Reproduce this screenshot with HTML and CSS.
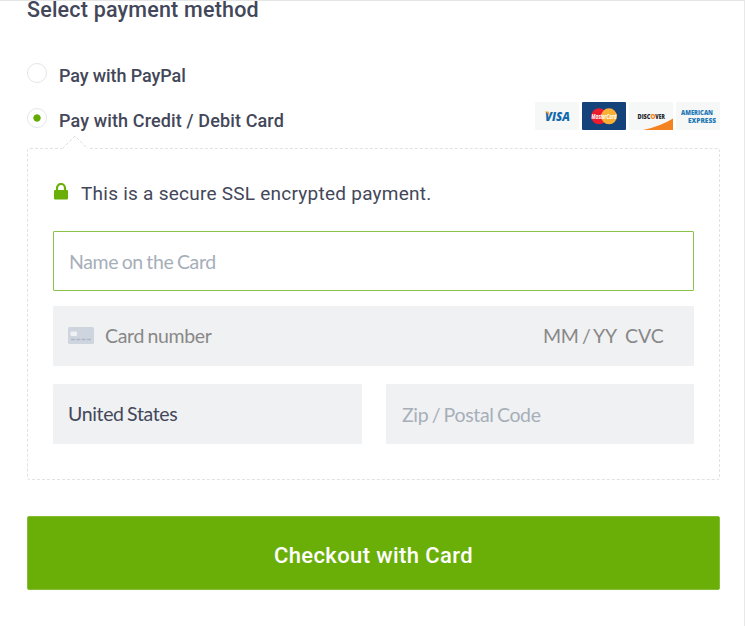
FILE: index.html
```html
<!DOCTYPE html>
<html lang="en">
<head>
    <meta charset="UTF-8">
    <meta name="viewport" content="width=device-width, initial-scale=1.0">
    <title>Select payment method</title>
    <link rel="stylesheet" href="styles.css">
</head>
<body>

    <form class="payment">
        <h2 class="title">Select payment method</h2>

        <!-- Payment methods -->
        <label class="method">
            <input type="radio" name="method" class="radio">
            <span class="method-name paypal-name">Pay with PayPal</span>
        </label>
        <div class="method-row">
            <label class="method">
                <input type="radio" name="method" class="radio" checked>
                <span class="method-name card-name">Pay with Credit / Debit Card</span>
            </label>
            <div class="cards">
                <svg class="card-logo" viewBox="0 0 44 28">
                    <rect width="44" height="28" rx="1" fill="#f6f8f8"/>
                    <text x="10" y="18.5" textLength="25" lengthAdjust="spacingAndGlyphs" font-size="12.5" font-weight="800" font-style="italic" fill="#1268ac">VISA</text>
                    <path d="M9.5 9.5h4l1.4 4.6c-1.2-2-3-3.6-5.4-4.6z" fill="#f3a42b"/>
                </svg>
                <svg class="card-logo" viewBox="0 0 44 28">
                    <rect width="44" height="28" rx="1" fill="#14427a"/>
                    <circle cx="17" cy="14.3" r="8" fill="#ec1c2e"/>
                    <circle cx="27" cy="14.3" r="8" fill="#fbb034"/>
                    <text x="9.5" y="16.5" textLength="25" lengthAdjust="spacingAndGlyphs" font-size="6.3" font-weight="bold" font-style="italic" fill="#fff">MasterCard</text>
                </svg>
                <svg class="card-logo" viewBox="0 0 44 28">
                    <rect width="44" height="28" rx="1" fill="#f6f8f8"/>
                    <path d="M14 28Q31 24.5 44 16.5V28z" fill="#f58220"/>
                    <text y="16.6" font-size="6.2" font-weight="800" fill="#26282b"><tspan x="8.5" textLength="13" lengthAdjust="spacingAndGlyphs">DISC</tspan><tspan x="21.5" fill="#f58220">O</tspan><tspan x="26.3" textLength="9.5" lengthAdjust="spacingAndGlyphs">VER</tspan></text>
                </svg>
                <svg class="card-logo" viewBox="0 0 44 28">
                    <rect width="44" height="28" rx="1" fill="#f6f8f8"/>
                    <text x="5" y="13" textLength="32" lengthAdjust="spacingAndGlyphs" font-size="6.3" font-weight="800" fill="#2379b5">AMERICAN</text>
                    <text x="12" y="20.5" textLength="28" lengthAdjust="spacingAndGlyphs" font-size="6.3" font-weight="800" fill="#2379b5">EXPRESS</text>
                </svg>
            </div>
        </div>

        <!-- Card form -->
        <div class="card-box">
            <svg class="pointer" viewBox="0 0 26 15">
                <path d="M0 13h26v2H0z" fill="#fff"/>
                <path d="M.5 13.5 13 1l12.5 12.5" fill="none" stroke="#d9dee2" stroke-dasharray="3 2"/>
            </svg>
            <div class="secure">
                <svg class="lock" viewBox="0 0 14 17">
                    <path d="M3 7.5V5a4 4 0 0 1 8 0v2.5" fill="none" stroke="#6aae08" stroke-width="2.2"/>
                    <rect y="7" width="14" height="9.5" rx="1" fill="#6aae08"/>
                </svg>
                <span class="secure-text">This is a secure SSL encrypted payment.</span>
            </div>
            <input type="text" class="input-field input-active" placeholder="Name on the Card">
            <div class="input-field card-number">
                <svg class="card-icon" viewBox="0 0 26 17">
                    <rect width="26" height="17" rx="1.5" fill="#cfd5df"/>
                    <rect x="2.5" y="4.5" width="6.5" height="4.5" rx="1" fill="#eff2f4"/>
                    <path d="M3 12.5h21" stroke="#aeb7c8" stroke-width="1.5" stroke-dasharray="4 1.3"/>
                </svg>
                <input type="text" class="number-input" placeholder="Card number">
                <input type="text" class="expiry-input" placeholder="MM / YY">
                <input type="text" class="cvc-input" placeholder="CVC">
            </div>
            <div class="address">
                <select class="input-field">
                    <option>United States</option>
                </select>
                <input type="text" class="input-field zip-input" placeholder="Zip / Postal Code">
            </div>
        </div>

        <button type="button" class="button">Checkout with Card</button>
    </form>

</body>
</html>
```

FILE: styles.css
```css
* {
    margin: 0;
    padding: 0;
    box-sizing: border-box;
}
body {
    height: 626px;
    overflow: hidden;
    background: #fff;
    border-top: 1px solid #e5e5e5;
    border-right: 1px solid #e8e8e8;
    color: #434759;
    font-family: Roboto, "Liberation Sans", sans-serif;
}
.payment {
    width: 693px;
    margin-left: 27px;
}
.title {
    height: 20px;
    font-size: 21.5px;
    line-height: 18px;
    font-weight: 500;
    letter-spacing: 0.2px;
    white-space: nowrap;
}
.method {
    display: flex;
    align-items: center;
    height: 28px;
    margin-top: 40px;
}
.method-row {
    display: flex;
    justify-content: space-between;
    margin-top: 17px;
}
.method-row .method {
    margin-top: 0;
}
.radio {
    appearance: none;
    width: 20px;
    height: 20px;
    margin: -4px 12px 0 0;
    border: 1.5px solid #e2e6eb;
    border-radius: 50%;
}
.radio:checked {
    background: radial-gradient(circle, #62ab00 3.3px, transparent 4px);
}
.method-name {
    font-size: 18px;
    font-weight: 500;
    white-space: nowrap;
}
.paypal-name {
    letter-spacing: -0.1px;
}
.card-name {
    letter-spacing: 0.13px;
}
.cards {
    display: flex;
    gap: 3px;
    margin-top: -4px;
}
.card-logo {
    width: 44px;
    height: 28px;
    font-family: "Open Sans", sans-serif;
}
.card-box {
    position: relative;
    height: 332px;
    margin-top: 14px;
    padding: 31px 25px 0;
    border: 1px dashed #dfe3e6;
    border-radius: 3px;
}
.pointer {
    position: absolute;
    top: -14px;
    left: 34px;
    width: 26px;
    height: 15px;
}
.secure {
    display: flex;
    align-items: center;
    height: 26px;
    margin-bottom: 25px;
}
.lock {
    width: 14px;
    height: 17px;
    margin: -4px 13px 0 1px;
}
.secure-text {
    font-size: 19px;
    letter-spacing: 0.25px;
    white-space: nowrap;
}
.input-field {
    display: block;
    width: 100%;
    height: 60px;
    padding: 0 15px;
    border: none;
    border-radius: 1px;
    background: #f0f1f3;
    font-family: Lato, sans-serif;
    font-size: 19.5px;
    letter-spacing: -0.35px;
    word-spacing: -1.2px;
    color: #434759;
}
.input-field::placeholder {
    color: #a6afb9;
}
.input-active {
    border: 1px solid #8bc34a;
    background: #fff;
}
.card-number {
    display: flex;
    align-items: center;
    margin-top: 15px;
}
.card-number input {
    min-width: 0;
    margin-top: -1px;
    border: none;
    background: none;
    font: inherit;
    letter-spacing: inherit;
    word-spacing: inherit;
}
.card-number input::placeholder {
    color: #888;
}
.card-icon {
    width: 26px;
    height: 17px;
    margin: -2px 11px 0 0;
}
.number-input {
    flex: 1;
}
.expiry-input {
    width: 82px;
}
.card-number .cvc-input {
    width: 54px;
    letter-spacing: -0.1px;
}
.address {
    display: grid;
    grid-template-columns: 309px 308px;
    justify-content: space-between;
    margin-top: 18px;
}
select {
    appearance: none;
}
select.input-field {
    padding-bottom: 2px;
}
.zip-input {
    padding: 1px 16px 0;
}
.button {
    display: block;
    width: 100%;
    height: 74px;
    margin-top: 36px;
    padding-top: 5px;
    border: 1px solid #85bd35;
    border-radius: 2px;
    background-color: #6aae08;
    color: #fff;
    font-family: inherit;
    font-size: 22px;
    font-weight: 500;
    letter-spacing: 0.4px;
    cursor: pointer;
}
```
